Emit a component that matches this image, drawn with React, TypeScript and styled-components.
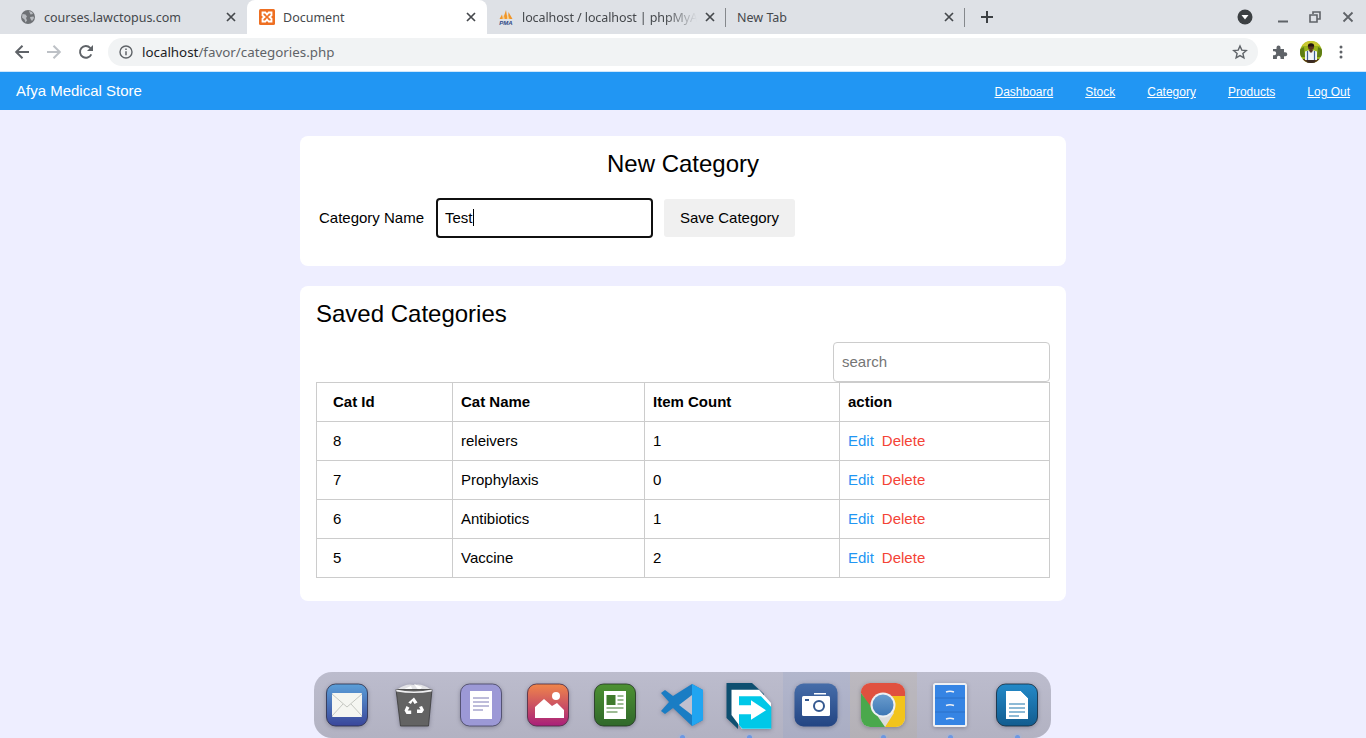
import React from 'react';
import styled, { createGlobalStyle } from 'styled-components';

const GlobalStyle = createGlobalStyle`
	html, body {
		margin: 0;
		padding: 0;
		background: #eeeeff;
		font-family: 'Liberation Sans', Arial, sans-serif;
	}
	* {
		box-sizing: border-box;
	}
`;

const categories = [
	{ id: 8, name: 'releivers', count: 1 },
	{ id: 7, name: 'Prophylaxis', count: 0 },
	{ id: 6, name: 'Antibiotics', count: 1 },
	{ id: 5, name: 'Vaccine', count: 2 },
];

const navLinks = ['Dashboard', 'Stock', 'Category', 'Products', 'Log Out'];

function CloseGlyph() {
	return (
		<svg width='10' height='10' viewBox='0 0 10 10'>
			<path d='M1 1l8 8M9 1l-8 8' stroke='#45484c' strokeWidth='1.7' />
		</svg>
	);
}

function GlobeFavicon() {
	return (
		<svg width='16' height='16' viewBox='0 0 16 16'>
			<circle cx='8' cy='8' r='7' fill='#6e7175' />
			<path
				d='M2.500 5l3 .5 1.500 2-1 1.500 1 2.500-1.500 2-1-3-2.500-2zM9 2l3 1 1 2-2.500.5zM10 8l3.500-.5.5 1.500-2 3-1.500-2z'
				fill='#b9bcc1'
			/>
		</svg>
	);
}

function XamppFavicon() {
	return (
		<svg width='16' height='16' viewBox='0 0 16 16'>
			<rect width='16' height='16' rx='1.500' fill='#ee6f22' />
			<path
				d='M3.500 3.500h2.800L8 5.500l1.700-2h2.800v2.800L10.500 8l2 1.700v2.800H9.700L8 10.500l-1.700 2H3.500V9.700L5.500 8l-2-1.700z'
				fill='none'
				stroke='#fff'
				strokeWidth='1.800'
			/>
		</svg>
	);
}

function PmaFavicon() {
	return (
		<svg width='16' height='16' viewBox='0 0 16 16'>
			<path d='M1.500 10L4 5.500l1 4.500zM5 10L8 1l1.500 9zM10 10L10.500 3l4 7z' fill='#f0962a' />
			<path d='M4.500 10L5.800 6 6.800 10zM8.800 10L9.800 5.500 11.500 10z' fill='#f8cf8a' />
			<PmaLetters x='8' y='15.500' textAnchor='middle'>
				PMA
			</PmaLetters>
		</svg>
	);
}

function ArrowIcon({ flip, color }: { flip?: boolean; color: string }) {
	return (
		<svg width='16' height='16' viewBox='0 0 16 16' style={flip ? { transform: 'scaleX(-1)' } : undefined}>
			<path d='M15 8H2.500M8.500 1.800L2.200 8l6.300 6.200' stroke={color} strokeWidth='2' fill='none' />
		</svg>
	);
}

function ReloadIcon() {
	return (
		<svg width='16' height='16' viewBox='0 0 16 16'>
			<path d='M13.300 10.300A5.900 5.900 0 1 1 12.200 3.800L14 5.600' stroke='#5f6368' strokeWidth='1.900' fill='none' />
			<path d='M15 1v6H9z' fill='#5f6368' />
		</svg>
	);
}

function InfoIcon() {
	return (
		<svg width='14' height='14' viewBox='0 0 14 14'>
			<circle cx='7' cy='7' r='6' stroke='#5f6368' strokeWidth='1.400' fill='none' />
			<path d='M7 6.200v4M7 3.600v1.500' stroke='#5f6368' strokeWidth='1.500' />
		</svg>
	);
}

function StarIcon() {
	return (
		<svg width='16' height='16' viewBox='0 0 16 16'>
			<path
				d='M8 2l1.800 4.100 4.500.4-3.400 3 1 4.400L8 11.600l-3.900 2.300 1-4.400-3.400-3 4.500-.4z'
				stroke='#5f6368'
				strokeWidth='1.400'
				fill='none'
			/>
		</svg>
	);
}

function PuzzleIcon() {
	return (
		<svg width='16' height='16' viewBox='0 0 16 16'>
			<path
				d='M1 5h3.500V3.500a2 2 0 0 1 4 0V5H12v3.200h1.300a2 2 0 0 1 0 4H12V15H8.500v-1.500a1.800 1.800 0 0 0-3.600 0V15H1v-3.800h1.200a2 2 0 0 0 0-4H1z'
				fill='#5f6368'
			/>
		</svg>
	);
}

function Avatar() {
	return (
		<svg width='22' height='22' viewBox='0 0 22 22'>
			<clipPath id='avatarClip'>
				<circle cx='11' cy='11' r='11' />
			</clipPath>
			<g clipPath='url(#avatarClip)'>
				<rect width='22' height='22' fill='#9ab51a' />
				<rect width='22' height='5' fill='#c9c832' />
				<rect x='0' y='18' width='22' height='4' fill='#5b3d1a' />
				<path d='M0 8l4-2 1 10H0zM22 8l-4-2-1 10h5z' fill='#5f7d14' />
				<path d='M5 19V10.500q6-2.500 12 0V19z' fill='#f1f4f6' />
				<path d='M7.500 10v9M14.500 10v9' stroke='#3f5f95' strokeWidth='1.200' />
				<path d='M9 9h4l-1 2.500h-2z' fill='#5a3420' />
				<circle cx='11' cy='6' r='3' fill='#5a3420' />
				<path d='M7.800 5.500a3.200 3.200 0 0 1 6.400 0z' fill='#20140f' />
				<path d='M7 19h8v3H7z' fill='#3a2a22' />
			</g>
		</svg>
	);
}

function MailDock() {
	return (
		<svg width='44' height='44' viewBox='0 0 44 44'>
			<defs>
				<linearGradient id='mailBg' x1='0' y1='0' x2='0' y2='1'>
					<stop offset='0' stopColor='#5b9fd8' />
					<stop offset='1' stopColor='#3a469a' />
				</linearGradient>
			</defs>
			<rect x='1.500' y='1' width='41' height='42' rx='9' fill='url(#mailBg)' stroke='#2b2f4a' strokeWidth='.8' />
			<rect x='7' y='10' width='30' height='24' rx='1' fill='#f5f6f1' />
			<path d='M7 11l15 13 15-13M7 33l11-12M37 33L26 21' stroke='#b9bbb5' strokeWidth='.8' fill='none' />
		</svg>
	);
}

function TrashDock() {
	return (
		<svg width='38' height='44' viewBox='0 0 38 44'>
			<path d='M3 6q8-6 16-4 8-2 16 4l-1 5H4z' fill='#e3e3e6' />
			<path d='M7 7l9-4 2 5zM19 1l8 3-3 4zM26 7l5-1-1 3z' fill='#fff' />
			<path d='M1 6.500h36L33.500 43h-28z' fill='#636363' stroke='#3a3a3a' strokeWidth='.8' />
			<path d='M1 6.500q18 4 36 0l-.5 2q-17.500 3-35 0z' fill='#f0f0f2' />
			<path
				d='M19 14.500l3.500 5-3 1.500-1.800-3-1.800 3-2.600-1.500zM27 23l2 4-2 3h-5v-3.500h3.500L24 24zM11.500 23l3 1.800-1.800 2.700h3.500V31H11.500l-2-3.500z'
				fill='#fff'
			/>
		</svg>
	);
}

function DocDock() {
	return (
		<svg width='44' height='44' viewBox='0 0 44 44'>
			<rect x='1.500' y='1' width='41' height='42' rx='9' fill='#9c99d6' stroke='#44435f' strokeWidth='.8' />
			<rect x='11' y='8' width='22' height='28' fill='#fff' />
			<path d='M14 15h16M14 19h16M14 23h16M14 27h10' stroke='#7d7ab5' strokeWidth='1' />
		</svg>
	);
}

function PhotoDock() {
	return (
		<svg width='44' height='44' viewBox='0 0 44 44'>
			<defs>
				<linearGradient id='photoBg' x1='0' y1='0' x2='0' y2='1'>
					<stop offset='0' stopColor='#f0864a' />
					<stop offset='1' stopColor='#a81f7a' />
				</linearGradient>
			</defs>
			<rect x='1.500' y='1' width='41' height='42' rx='9' fill='url(#photoBg)' stroke='#4a2a40' strokeWidth='.8' />
			<circle cx='30' cy='13' r='4' fill='#fff' />
			<path d='M9 35V24l9-8 8 7 5-3 7 7v8z' fill='#fff' />
		</svg>
	);
}

function SheetDock() {
	return (
		<svg width='44' height='44' viewBox='0 0 44 44'>
			<defs>
				<linearGradient id='sheetBg' x1='0' y1='0' x2='0' y2='1'>
					<stop offset='0' stopColor='#4d9133' />
					<stop offset='1' stopColor='#30682a' />
				</linearGradient>
			</defs>
			<rect x='1.500' y='1' width='41' height='42' rx='9' fill='url(#sheetBg)' stroke='#22351f' strokeWidth='.8' />
			<rect x='11' y='8' width='22' height='28' fill='#fff' />
			<rect x='13.500' y='12' width='9' height='10' fill='#3f7a2c' />
			<path d='M24.500 13h6M24.500 17h6M24.500 21h6M13.500 25h17M13.500 29h11' stroke='#3f7a2c' strokeWidth='1.200' />
		</svg>
	);
}

function CodeDock() {
	return (
		<svg width='44' height='44' viewBox='0 0 44 44'>
			<path d='M32 1l11 6v30l-11 6-19-18-8 6-4-3 8-9-8-9 4-3 8 6z' fill='#1a7dc4' />
			<path d='M32 1l11 6v30l-11 6z' fill='#21a5f1' />
			<path d='M32 12L19 22l13 10z' fill='#c0c0cf' />
		</svg>
	);
}

function ShareDock() {
	return (
		<svg width='46' height='48' viewBox='0 0 46 48'>
			<path d='M.5 0H26l12 11v12H12v23L.5 35z' fill='#0e4f70' />
			<path d='M5.500 6.700H33L45 20v26H16L5.500 32z' fill='#fff' />
			<path d='M13 13.300h22L45.300 24v21.700h-29L13 42z' fill='#00c8e8' />
			<path d='M5.500 22.300H25v-5l15 10-15 9.400v-5.400H13v-9z' fill='#fff' />
		</svg>
	);
}

function CameraDock() {
	return (
		<svg width='44' height='44' viewBox='0 0 44 44'>
			<defs>
				<linearGradient id='cameraBg' x1='0' y1='0' x2='0' y2='1'>
					<stop offset='0' stopColor='#466da9' />
					<stop offset='1' stopColor='#234583' />
				</linearGradient>
			</defs>
			<rect x='0.500' y='0.500' width='43' height='43' rx='9' fill='url(#cameraBg)' />
			<path d='M20 10h12v1.500H20z' fill='#fff' />
			<rect x='8' y='13' width='28' height='20' rx='1.500' fill='#fff' />
			<circle cx='25' cy='23' r='5' fill='none' stroke='#34588f' strokeWidth='2' />
			<rect x='11' y='16' width='4' height='2' fill='#34588f' />
		</svg>
	);
}

function ChromeDock() {
	return (
		<svg width='44' height='44' viewBox='0 0 44 44'>
			<defs>
				<clipPath id='chromeClip'>
					<rect width='44' height='44' rx='9' />
				</clipPath>
				<linearGradient id='chromeEye' x1='0' y1='0' x2='0' y2='1'>
					<stop offset='0' stopColor='#6a9ccd' />
					<stop offset='1' stopColor='#3f78b5' />
				</linearGradient>
			</defs>
			<g clipPath='url(#chromeClip)'>
				<rect width='44' height='44' fill='#ddd' />
				<path d='M0 0h44v13H22L10 26 0 10z' fill='#e0513f' />
				<path d='M0 10l11 15 13 19H0z' fill='#4aa84c' />
				<path d='M22 13h22v31H24l9-14z' fill='#f2c41c' />
			</g>
			<circle cx='22' cy='22' r='12.500' fill='#eef0f2' />
			<circle cx='22' cy='22' r='10.500' fill='url(#chromeEye)' />
		</svg>
	);
}

function CabinetDock() {
	return (
		<svg width='34' height='44' viewBox='0 0 34 44'>
			<rect x='1' y='1' width='32' height='42' rx='1.500' fill='#3584e4' stroke='#eef0f4' strokeWidth='2' />
			<path d='M2 15h30M2 29h30' stroke='#2a6cc0' strokeWidth='.8' />
			<path d='M13 9q4-1.500 8 0M13 22.500q4-1.500 8 0M13 36q4-1.500 8 0' stroke='#eef0f4' strokeWidth='1.500' fill='none' />
		</svg>
	);
}

function WriterDock() {
	return (
		<svg width='44' height='44' viewBox='0 0 44 44'>
			<defs>
				<linearGradient id='writerBg' x1='0' y1='0' x2='0' y2='1'>
					<stop offset='0' stopColor='#2389c8' />
					<stop offset='1' stopColor='#125c8f' />
				</linearGradient>
			</defs>
			<rect x='1.500' y='1' width='41' height='42' rx='9' fill='url(#writerBg)' stroke='#12283a' strokeWidth='.8' />
			<path d='M11 8h15l7 7v21H11z' fill='#fff' />
			<path d='M26 8l7 7' stroke='#2389c8' strokeWidth='.8' />
			<path d='M14 21h16M14 25h16M14 29h16M14 33h10' stroke='#1d76ad' strokeWidth='1.100' />
		</svg>
	);
}

const dockItems = [
	{ key: 'mail', icon: <MailDock /> },
	{ key: 'trash', icon: <TrashDock /> },
	{ key: 'doc', icon: <DocDock /> },
	{ key: 'photo', icon: <PhotoDock /> },
	{ key: 'sheet', icon: <SheetDock /> },
	{ key: 'code', icon: <CodeDock />, running: true },
	{ key: 'share', icon: <ShareDock />, running: true },
	{ key: 'camera', icon: <CameraDock />, tint: 'rgba(120, 145, 200, 0.15)' },
	{ key: 'chrome', icon: <ChromeDock />, running: true, tint: 'rgba(190, 170, 110, 0.14)' },
	{ key: 'cabinet', icon: <CabinetDock />, running: true },
	{ key: 'writer', icon: <WriterDock />, running: true },
];

export default function App() {
	return (
		<>
			<GlobalStyle />
			<Page>
				<TabStrip>
					<Tab $left={13} $width={240}>
						<GlobeFavicon />
						<TabTitle>courses.lawctopus.com</TabTitle>
						<CloseGlyph />
					</Tab>
					<Tab $left={12} $width={240} $active>
						<XamppFavicon />
						<TabTitle>Document</TabTitle>
						<CloseGlyph />
					</Tab>
					<Tab $left={11} $width={239} $divider>
						<PmaFavicon />
						<TabTitle $fade>localhost / localhost | phpMyA</TabTitle>
						<CloseGlyph />
					</Tab>
					<Tab $left={11} $width={239} $divider>
						<TabTitle>New Tab</TabTitle>
						<CloseGlyph />
					</Tab>
					<NewTab>
						<svg width='14' height='14' viewBox='0 0 14 14'>
							<path d='M7 1v12M1 7h12' stroke='#3c4043' strokeWidth='2' />
						</svg>
					</NewTab>
					<WindowControls>
						<svg width='16' height='16' viewBox='0 0 16 16'>
							<circle cx='8' cy='8' r='7.500' fill='#3c4043' />
							<path d='M4.500 6h7L8 10.500z' fill='#fff' />
						</svg>
						<WindowButton $offset={24}>
							<svg width='12' height='12' viewBox='0 0 12 12'>
								<path d='M1 10.500h10' stroke='#5f6368' strokeWidth='2' />
							</svg>
						</WindowButton>
						<WindowButton $offset={20}>
							<svg width='12' height='12' viewBox='0 0 12 12'>
								<path d='M4 3V1h7v7H8.500M1 4h7v7H1z' stroke='#5f6368' strokeWidth='1.600' fill='none' />
							</svg>
						</WindowButton>
						<WindowButton $offset={21}>
							<svg width='12' height='12' viewBox='0 0 12 12'>
								<path d='M1.500 1.500l9 9M10.500 1.500l-9 9' stroke='#5f6368' strokeWidth='1.800' />
							</svg>
						</WindowButton>
					</WindowControls>
				</TabStrip>

				<Toolbar>
					<NavIcon>
						<ArrowIcon color='#5f6368' />
					</NavIcon>
					<NavIcon>
						<ArrowIcon flip color='#bdc1c6' />
					</NavIcon>
					<NavIcon>
						<ReloadIcon />
					</NavIcon>
					<Omnibox>
						<InfoIcon />
						<Url>
							localhost<UrlPath>/favor/categories.php</UrlPath>
						</Url>
						<StarSlot>
							<StarIcon />
						</StarSlot>
					</Omnibox>
					<ToolbarEnd>
						<PuzzleIcon />
						<Avatar />
						<svg width='4' height='14' viewBox='0 0 4 14'>
							<circle cx='2' cy='2' r='1.500' fill='#5f6368' />
							<circle cx='2' cy='7' r='1.500' fill='#5f6368' />
							<circle cx='2' cy='12' r='1.500' fill='#5f6368' />
						</svg>
					</ToolbarEnd>
				</Toolbar>

				<NavBar>
					<Brand>Afya Medical Store</Brand>
					<NavLinks>
						{navLinks.map((link) => (
							<NavLink key={link} href='#'>
								{link}
							</NavLink>
						))}
					</NavLinks>
				</NavBar>

				<Main>
					<FormCard>
						<CenteredTitle>New Category</CenteredTitle>
						<FormRow>
							<FieldLabel>Category Name</FieldLabel>
							<CategoryInput>
								Test
								<Caret />
							</CategoryInput>
							<SaveButton>Save Category</SaveButton>
						</FormRow>
					</FormCard>

					<ListCard>
						<CardTitle>Saved Categories</CardTitle>
						<SearchRow>
							<SearchInput placeholder='search' />
						</SearchRow>
						<Table>
							<colgroup>
								<col width='136' />
								<col width='192' />
								<col width='195' />
								<col width='210' />
							</colgroup>
							<thead>
								<tr>
									<HeadCell $first>Cat Id</HeadCell>
									<HeadCell>Cat Name</HeadCell>
									<HeadCell>Item Count</HeadCell>
									<HeadCell>action</HeadCell>
								</tr>
							</thead>
							<tbody>
								{categories.map((cat) => (
									<tr key={cat.id}>
										<Cell $first>{cat.id}</Cell>
										<Cell>{cat.name}</Cell>
										<Cell>{cat.count}</Cell>
										<Cell>
											<ActionLink $color='#2196f3'>Edit</ActionLink>
											<ActionLink $color='#f44336'>Delete</ActionLink>
										</Cell>
									</tr>
								))}
							</tbody>
						</Table>
					</ListCard>
				</Main>

				<Dock>
					{dockItems.map((item) => (
						<DockSlot key={item.key} $tint={item.tint}>
							{item.icon}
							{item.running && <RunningDot />}
						</DockSlot>
					))}
				</Dock>
			</Page>
		</>
	);
}

const PmaLetters = styled('text')`
	font-family: 'Liberation Sans', sans-serif;
	font-size: 6px;
	font-weight: 700;
	font-style: italic;
	fill: #2f4a86;
`;

const Page = styled('div')`
	position: relative;
	width: 1366px;
	height: 738px;
	overflow: hidden;
	display: flex;
	flex-direction: column;
	background: #eeeeff;
`;

const TabStrip = styled('div')`
	height: 34px;
	flex: none;
	display: flex;
	align-items: stretch;
	padding-left: 7px;
	background: #dee1e6;
	font-family: 'Noto Sans', sans-serif;
`;

const Tab = styled('div')<{ $left: number; $width: number; $active?: boolean; $divider?: boolean }>`
	position: relative;
	width: ${(p) => p.$width}px;
	display: flex;
	align-items: center;
	gap: 8px;
	padding: 0 11px 0 ${(p) => p.$left}px;
	background: ${(p) => (p.$active ? '#fff' : 'transparent')};
	border-radius: ${(p) => (p.$active ? '8px 8px 0 0' : '0')};
	&::after {
		content: '';
		display: ${(p) => (p.$divider ? 'block' : 'none')};
		position: absolute;
		right: 0;
		top: 8px;
		height: 19px;
		width: 1px;
		background: #85888c;
	}
`;

const TabTitle = styled('span')<{ $fade?: boolean }>`
	flex: 1;
	min-width: 0;
	white-space: nowrap;
	font-size: 12.500px;
	color: #45484c;
	${(p) =>
		p.$fade &&
		`
		letter-spacing: -0.1px;
		-webkit-mask-image: linear-gradient(to right, #000 82%, transparent 100%);
		mask-image: linear-gradient(to right, #000 82%, transparent 100%);
	`}
`;

const NewTab = styled('div')`
	display: flex;
	align-items: center;
	margin-left: 15px;
`;

const WindowControls = styled('div')`
	margin-left: auto;
	display: flex;
	align-items: center;
	padding-right: 12px;
`;

const WindowButton = styled('div')<{ $offset: number }>`
	display: flex;
	margin-left: ${(p) => p.$offset}px;
`;

const Toolbar = styled('div')`
	height: 38px;
	flex: none;
	display: flex;
	align-items: center;
	padding: 0 0 2px 14px;
	background: #fff;
	border-bottom: 1px solid #cfe7fb;
	font-family: 'Noto Sans', sans-serif;
`;

const NavIcon = styled('div')`
	display: flex;
	width: 32px;
`;

const Omnibox = styled('div')`
	width: 1150px;
	height: 28px;
	margin-left: -2px;
	display: flex;
	align-items: center;
	gap: 9px;
	padding: 0 10px 0 11px;
	border-radius: 14px;
	background: #f1f3f4;
`;

const Url = styled('span')`
	font-size: 13.350px;
	color: #202124;
`;

const UrlPath = styled('span')`
	color: #5f6368;
`;

const StarSlot = styled('div')`
	margin-left: auto;
	display: flex;
`;

const ToolbarEnd = styled('div')`
	display: flex;
	align-items: center;
	gap: 12px;
	margin-left: 14px;
	svg:last-child {
		margin-left: 5px;
	}
`;

const NavBar = styled('div')`
	height: 38px;
	flex: none;
	display: flex;
	align-items: center;
	justify-content: space-between;
	padding: 0 16px;
	background: #2196f3;
	color: #fff;
`;

const Brand = styled('div')`
	padding-bottom: 2px;
	font-size: 15px;
`;

const NavLinks = styled('div')`
	display: flex;
	gap: 32px;
	padding-top: 2px;
`;

const NavLink = styled('a')`
	font-size: 12px;
	color: #fff;
	text-decoration: underline;
`;

const Main = styled('main')`
	width: 766px;
	margin: 26px auto 0;
	display: flex;
	flex-direction: column;
	gap: 20px;
`;

const FormCard = styled('section')`
	height: 130px;
	padding: 14px 19px 0;
	border-radius: 8px;
	background: #fff;
`;

const CenteredTitle = styled('h2')`
	margin: 0 0 20px;
	font-size: 24px;
	font-weight: 400;
	line-height: 28px;
	text-align: center;
	color: #000;
`;

const FormRow = styled('div')`
	display: flex;
	align-items: center;
`;

const FieldLabel = styled('label')`
	width: 117px;
	padding-bottom: 2px;
	font-size: 15px;
	color: #000;
`;

const CategoryInput = styled('div')`
	width: 217px;
	height: 40px;
	display: flex;
	align-items: center;
	padding: 0 0 2px 7px;
	border: 2px solid #101010;
	border-radius: 4px;
	font-size: 15px;
	color: #000;
`;

const Caret = styled('span')`
	width: 1px;
	height: 17px;
	background: #000;
`;

const SaveButton = styled('button')`
	width: 131px;
	height: 38px;
	margin-left: 11px;
	padding: 0 0 2px;
	border: none;
	border-radius: 3px;
	background: #f0f0f0;
	font-family: inherit;
	font-size: 15px;
	color: #000;
`;

const ListCard = styled('section')`
	height: 315px;
	padding: 14px 16px 0;
	border-radius: 8px;
	background: #fff;
`;

const CardTitle = styled('h2')`
	margin: 0 0 14px;
	font-size: 24px;
	font-weight: 400;
	line-height: 28px;
	color: #000;
`;

const SearchRow = styled('div')`
	display: flex;
	justify-content: flex-end;
`;

const SearchInput = styled('input')`
	width: 217px;
	height: 40px;
	padding: 0 8px 2px;
	border: 1px solid #ccc;
	border-radius: 4px;
	outline: none;
	font-family: inherit;
	font-size: 15px;
	color: #000;
	&::placeholder {
		color: #757575;
	}
`;

const Table = styled('table')`
	width: 734px;
	table-layout: fixed;
	border-collapse: collapse;
	font-size: 15px;
	color: #000;
`;

const HeadCell = styled('th')<{ $first?: boolean }>`
	height: 39px;
	padding: 0 0 2px ${(p) => (p.$first ? 16 : 8)}px;
	border: 1px solid #ccc;
	text-align: left;
	font-weight: 700;
`;

const Cell = styled('td')<{ $first?: boolean }>`
	height: 39px;
	padding: 0 0 2px ${(p) => (p.$first ? 16 : 8)}px;
	border: 1px solid #ccc;
`;

const ActionLink = styled('a')<{ $color: string }>`
	margin-right: 8px;
	color: ${(p) => p.$color};
`;

const Dock = styled('nav')`
	position: absolute;
	left: 314px;
	top: 672px;
	width: 737px;
	height: 66px;
	display: flex;
	border-radius: 18px;
	background: linear-gradient(#bcbccd, #b2b2c2);
	overflow: hidden;
`;

const DockSlot = styled('div')<{ $tint?: string }>`
	position: relative;
	width: 67px;
	height: 66px;
	padding: 11px 1px 0 0;
	display: flex;
	justify-content: center;
	align-items: flex-start;
	background: ${(p) => p.$tint ?? 'transparent'};
	svg {
		filter: drop-shadow(0 1px 2px rgba(40, 40, 60, 0.35));
	}
`;

const RunningDot = styled('span')`
	position: absolute;
	left: 31px;
	bottom: -2px;
	width: 5px;
	height: 5px;
	border-radius: 50%;
	background: rgba(90, 145, 235, 0.8);
	box-shadow: 0 0 3px #8ab6f5;
`;
